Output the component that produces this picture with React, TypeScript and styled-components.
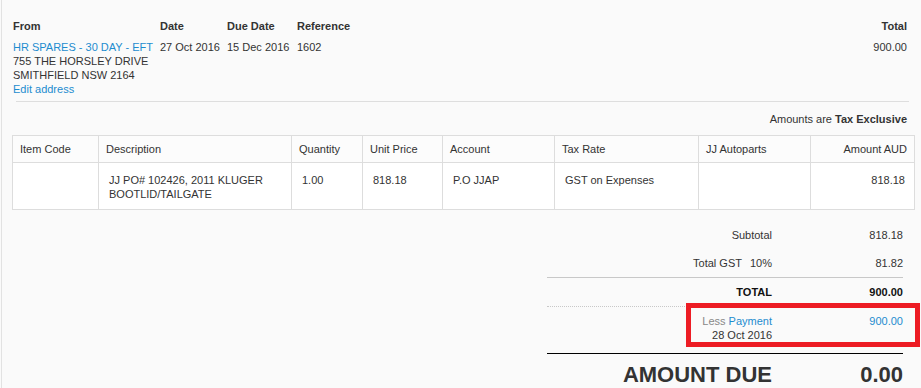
import styled, { createGlobalStyle } from "styled-components";

const GlobalStyle = createGlobalStyle`
  html, body {
    margin: 0;
    padding: 0;
    background: #fafafa;
  }
  body {
    font-family: "Liberation Sans", Arial, sans-serif;
    font-size: 11px;
    line-height: 14px;
    color: #333;
  }
`;

const columns = [
  { title: "Item Code", width: 86 },
  { title: "Description", width: 193 },
  { title: "Quantity", width: 71 },
  { title: "Unit Price", width: 80 },
  { title: "Account", width: 112 },
  { title: "Tax Rate", width: 144 },
  { title: "JJ Autoparts", width: 112 },
  { title: "Amount AUD", width: 104, right: true },
];

const App: React.FC = () => {
  return (
    <Page>
      <GlobalStyle />
      <Summary>
        <Label>From</Label>
        <Label>Date</Label>
        <Label>Due Date</Label>
        <Label>Reference</Label>
        <Label $right>Total</Label>
        <div>
          <Link href="#">HR SPARES - 30 DAY - EFT</Link>
          <div>755 THE HORSLEY DRIVE</div>
          <div>SMITHFIELD NSW 2164</div>
          <Link href="#">Edit address</Link>
        </div>
        <div>27 Oct 2016</div>
        <div>15 Dec 2016</div>
        <div>1602</div>
        <Value $right>900.00</Value>
      </Summary>
      <Divider />
      <TaxNote>
        Amounts are <b>Tax Exclusive</b>
      </TaxNote>
      <Lines>
        <colgroup>
          {columns.map((c) => (
            <col key={c.title} style={{ width: c.width }} />
          ))}
        </colgroup>
        <thead>
          <tr>
            {columns.map((c) => (
              <Th key={c.title} $right={c.right}>
                {c.title}
              </Th>
            ))}
          </tr>
        </thead>
        <tbody>
          <tr>
            <Td></Td>
            <Td>
              JJ PO# 102426, 2011 KLUGER
              <br />
              BOOTLID/TAILGATE
            </Td>
            <Td>1.00</Td>
            <Td>818.18</Td>
            <Td>P.O JJAP</Td>
            <Td>GST on Expenses</Td>
            <Td></Td>
            <Td $right>818.18</Td>
          </tr>
        </tbody>
      </Lines>
      <Totals>
        <TotalRow>
          <span>Subtotal</span>
          <span>818.18</span>
        </TotalRow>
        <TotalRow $line="solid">
          <span>
            Total GST<Rate>10%</Rate>
          </span>
          <span>81.82</span>
        </TotalRow>
        <TotalRow $line="dotted" $strong>
          <span>TOTAL</span>
          <span>900.00</span>
        </TotalRow>
        <PaymentRow>
          <span>
            <Muted>Less</Muted> <Link href="#">Payment</Link>
            <br />
            28 Oct 2016
          </span>
          <Link href="#">900.00</Link>
        </PaymentRow>
        <DueRow>
          <span>AMOUNT DUE</span>
          <span>0.00</span>
        </DueRow>
      </Totals>
      <Highlight />
    </Page>
  );
};

const Page = styled.div`
  position: relative;
  margin-left: 1px;
  min-height: 388px;
  border-left: 1px solid #e2e2e2;
  padding-top: 19px;
  box-sizing: border-box;
`;

const Summary = styled.div`
  display: grid;
  grid-template-columns: 147px 67px 70px 1fr auto;
  row-gap: 7px;
  padding: 0 14px 0 11px;
`;

const Label = styled.div<{ $right?: boolean }>`
  font-weight: bold;
  text-align: ${(p) => (p.$right ? "right" : "left")};
`;

const Value = styled.div<{ $right?: boolean }>`
  text-align: ${(p) => (p.$right ? "right" : "left")};
`;

const Link = styled.a`
  display: inline-block;
  color: #1d8ccf;
  text-decoration: none;
`;

const Divider = styled.div`
  height: 1px;
  background: #dedede;
  margin: 5px 12px 0 14px;
`;

const TaxNote = styled.div`
  margin-top: 10px;
  padding-right: 14px;
  text-align: right;
`;

const Lines = styled.table`
  margin: 9px 7px 0 10px;
  width: 902px;
  table-layout: fixed;
  border-collapse: collapse;
  background: #fff;
`;

const Th = styled.th<{ $right?: boolean }>`
  border: 1px solid #ddd;
  padding: 6px 7px;
  font-weight: normal;
  text-align: ${(p) => (p.$right ? "right" : "left")};
  background: #fcfcfc;
`;

const Td = styled.td<{ $right?: boolean }>`
  border: 1px solid #ddd;
  padding: 10px 9px 8px 10px;
  height: 28px;
  vertical-align: top;
  text-align: ${(p) => (p.$right ? "right" : "left")};
`;

const Totals = styled.div`
  margin: 11px 0 0 545px;
  width: 356px;
`;

const TotalRow = styled.div<{ $line?: "solid" | "dotted"; $strong?: boolean }>`
  display: grid;
  grid-template-columns: 225px 131px;
  padding: 7px 0;
  text-align: right;
  font-weight: ${(p) => (p.$strong ? "bold" : "normal")};
  color: ${(p) => (p.$strong ? "#111" : "#333")};
  border-bottom: ${(p) => (p.$line ? `1px ${p.$line} #c8c8c8` : "none")};
`;

const PaymentRow = styled(TotalRow)`
  padding: 7px 0 11px;
  border-bottom: 1px solid #000;
`;

const Rate = styled.span`
  margin-left: 8px;
`;

const Muted = styled.span`
  color: #888;
`;

const DueRow = styled.div`
  display: grid;
  grid-template-columns: 225px 131px;
  padding-top: 8px;
  text-align: right;
  font-size: 22px;
  line-height: 26px;
  font-weight: bold;
  color: #333;
`;

const Highlight = styled.div`
  position: absolute;
  left: 684px;
  top: 303px;
  width: 234px;
  height: 44px;
  box-sizing: border-box;
  border: 5px solid #ed1c24;
  pointer-events: none;
`;

export default App;
